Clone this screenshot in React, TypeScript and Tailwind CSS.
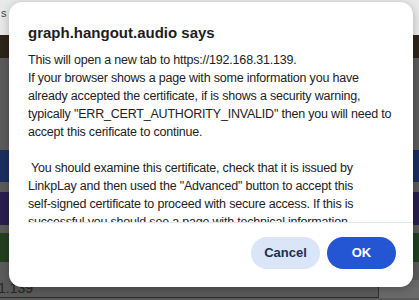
import React from 'react';

const lines = [
  'This will open a new tab to https://192.168.31.139.',
  'If your browser shows a page with some information you have',
  'already accepted the certificate, if is shows a security warning,',
  'typically "ERR_CERT_AUTHORITY_INVALID" then you will need to',
  'accept this cerificate to continue.',
  '',
  ' You should examine this certificate, check that it is issued by',
  'LinkpLay and then used the "Advanced" button to accept this',
  'self-signed certificate to proceed with secure access. If this is',
  'successful you should see a page with technical information',
  'about the device.',
];

export default function App() {
  return (
    <div className="relative w-[419px] h-[300px] overflow-hidden bg-[#5b5b5b]" style={{ fontFamily: '"Liberation Sans", Arial, sans-serif' }}>
      {/* Page behind the dialog (dimmed) */}
      <div className="flex flex-col h-full">
        <div className="h-[35px] bg-[#e9e9e9] text-[11px] text-[#444] pl-[1px] pt-[8px] leading-none">s</div>
        <div className="h-[23px] bg-[#2e2419]" />
        <div className="h-[92px] bg-[#5b5b5b]" />
        <div className="h-[32px] bg-[#1b2f60]" />
        <div className="h-[10px] bg-[#5b5b5b]" />
        <div className="h-[33px] bg-[#2a1f4e]" />
        <div className="h-[8px] bg-[#5b5b5b]" />
        <div className="h-[29px] bg-[#22401f]" />
        <div className="h-[18px] bg-[#5b5b5b]" />
        <div className="flex h-[18px]">
          <div className="w-[381px] bg-[#5a5a5a] border-r border-b border-[#2e2e2e] text-[14px] leading-[16px] text-[#262626] -ml-[2px]">1.139</div>
          <div className="flex-1 bg-[#6a6a6a]" />
        </div>
      </div>

      {/* Alert dialog */}
      <div className="absolute left-[9px] top-[2px] w-[404px] h-[285px] bg-white rounded-[13px] shadow-[0_2px_10px_rgba(0,0,0,0.25)] flex flex-col">
        <h1 className="pl-[19px] pt-[22px] text-[15px] font-bold leading-[18px] text-[#1d1d1d]">graph.hangout.audio says</h1>
        <div className="ml-[19px] mt-[9px] h-[172px] overflow-hidden border-b border-[#dfe8f6]">
          <p className="text-[12.5px] tracking-[-0.2px] leading-[18px] text-[#222] whitespace-pre">{lines.join('\n')}</p>
        </div>
        <div className="flex justify-end gap-[7px] pr-[17px] mt-[14px]">
          <button className="w-[69px] h-[32px] rounded-full bg-[#dbe5f8] text-[#1d2d52] text-[13px] font-semibold">Cancel</button>
          <button className="w-[69px] h-[32px] rounded-full bg-[#2456d3] text-white text-[13px] font-semibold">OK</button>
        </div>
      </div>
    </div>
  );
}
